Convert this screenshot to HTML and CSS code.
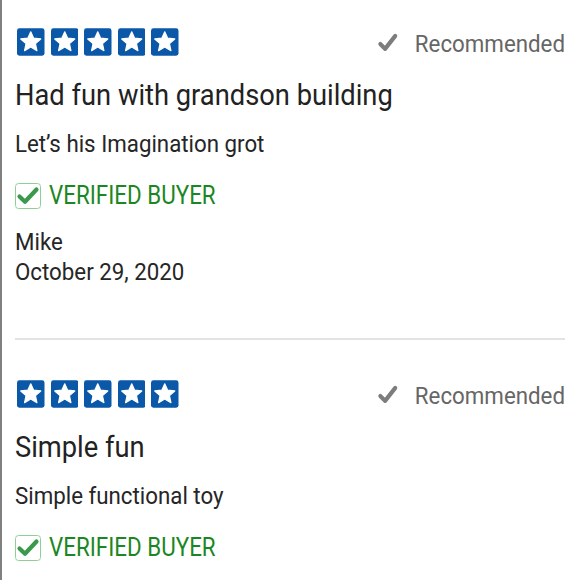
FILE: index.html
```html
<!DOCTYPE html>
<html>
<head>
<meta charset="utf-8">
<link rel="stylesheet" href="styles.css">
</head>
<body>
<div class="page">
  <div class="review">
    <div class="top">
      <div class="stars">
        <svg class="star" viewBox="0 0 28 28"><rect width="28" height="28" rx="2.5" fill="#0b57a8"/><polygon points="14,3.6 17,10.1 24.2,10.9 18.8,15.7 20.3,22.8 14,19.2 7.7,22.8 9.2,15.7 3.8,10.9 11,10.1" fill="#fff" stroke="#fff" stroke-width="1.2" stroke-linejoin="round"/></svg>
        <svg class="star" viewBox="0 0 28 28"><rect width="28" height="28" rx="2.5" fill="#0b57a8"/><polygon points="14,3.6 17,10.1 24.2,10.9 18.8,15.7 20.3,22.8 14,19.2 7.7,22.8 9.2,15.7 3.8,10.9 11,10.1" fill="#fff" stroke="#fff" stroke-width="1.2" stroke-linejoin="round"/></svg>
        <svg class="star" viewBox="0 0 28 28"><rect width="28" height="28" rx="2.5" fill="#0b57a8"/><polygon points="14,3.6 17,10.1 24.2,10.9 18.8,15.7 20.3,22.8 14,19.2 7.7,22.8 9.2,15.7 3.8,10.9 11,10.1" fill="#fff" stroke="#fff" stroke-width="1.2" stroke-linejoin="round"/></svg>
        <svg class="star" viewBox="0 0 28 28"><rect width="28" height="28" rx="2.5" fill="#0b57a8"/><polygon points="14,3.6 17,10.1 24.2,10.9 18.8,15.7 20.3,22.8 14,19.2 7.7,22.8 9.2,15.7 3.8,10.9 11,10.1" fill="#fff" stroke="#fff" stroke-width="1.2" stroke-linejoin="round"/></svg>
        <svg class="star" viewBox="0 0 28 28"><rect width="28" height="28" rx="2.5" fill="#0b57a8"/><polygon points="14,3.6 17,10.1 24.2,10.9 18.8,15.7 20.3,22.8 14,19.2 7.7,22.8 9.2,15.7 3.8,10.9 11,10.1" fill="#fff" stroke="#fff" stroke-width="1.2" stroke-linejoin="round"/></svg>
      </div>
      <div class="rec">
        <svg class="rec-check" viewBox="0 0 21 18"><path d="M3 10.5 L8 15 L18.5 2.8" fill="none" stroke="#7d7d7d" stroke-width="4.2" stroke-linecap="round" stroke-linejoin="round"/></svg>
        <span>Recommended</span>
      </div>
    </div>
    <h2 class="title">Had fun with grandson building</h2>
    <p class="body">Let’s his Imagination grot</p>
    <div class="verified">
      <svg class="vbox" viewBox="0 0 26 26"><rect x="0.5" y="0.5" width="25" height="25" rx="3" fill="#fff" stroke="#8fcf97"/><path d="M4.5 13.5 L10 18.8 L21.5 6.5" fill="none" stroke="#3a994b" stroke-width="4.2" stroke-linecap="round" stroke-linejoin="round"/></svg>
      <span class="vtext">VERIFIED BUYER</span>
    </div>
    <div class="author">Mike</div>
    <div class="date">October 29, 2020</div>
  </div>
  <hr class="divider">
  <div class="review">
    <div class="top">
      <div class="stars">
        <svg class="star" viewBox="0 0 28 28"><rect width="28" height="28" rx="2.5" fill="#0b57a8"/><polygon points="14,3.6 17,10.1 24.2,10.9 18.8,15.7 20.3,22.8 14,19.2 7.7,22.8 9.2,15.7 3.8,10.9 11,10.1" fill="#fff" stroke="#fff" stroke-width="1.2" stroke-linejoin="round"/></svg>
        <svg class="star" viewBox="0 0 28 28"><rect width="28" height="28" rx="2.5" fill="#0b57a8"/><polygon points="14,3.6 17,10.1 24.2,10.9 18.8,15.7 20.3,22.8 14,19.2 7.7,22.8 9.2,15.7 3.8,10.9 11,10.1" fill="#fff" stroke="#fff" stroke-width="1.2" stroke-linejoin="round"/></svg>
        <svg class="star" viewBox="0 0 28 28"><rect width="28" height="28" rx="2.5" fill="#0b57a8"/><polygon points="14,3.6 17,10.1 24.2,10.9 18.8,15.7 20.3,22.8 14,19.2 7.7,22.8 9.2,15.7 3.8,10.9 11,10.1" fill="#fff" stroke="#fff" stroke-width="1.2" stroke-linejoin="round"/></svg>
        <svg class="star" viewBox="0 0 28 28"><rect width="28" height="28" rx="2.5" fill="#0b57a8"/><polygon points="14,3.6 17,10.1 24.2,10.9 18.8,15.7 20.3,22.8 14,19.2 7.7,22.8 9.2,15.7 3.8,10.9 11,10.1" fill="#fff" stroke="#fff" stroke-width="1.2" stroke-linejoin="round"/></svg>
        <svg class="star" viewBox="0 0 28 28"><rect width="28" height="28" rx="2.5" fill="#0b57a8"/><polygon points="14,3.6 17,10.1 24.2,10.9 18.8,15.7 20.3,22.8 14,19.2 7.7,22.8 9.2,15.7 3.8,10.9 11,10.1" fill="#fff" stroke="#fff" stroke-width="1.2" stroke-linejoin="round"/></svg>
      </div>
      <div class="rec">
        <svg class="rec-check" viewBox="0 0 21 18"><path d="M3 10.5 L8 15 L18.5 2.8" fill="none" stroke="#7d7d7d" stroke-width="4.2" stroke-linecap="round" stroke-linejoin="round"/></svg>
        <span>Recommended</span>
      </div>
    </div>
    <h2 class="title">Simple fun</h2>
    <p class="body">Simple functional toy</p>
    <div class="verified">
      <svg class="vbox" viewBox="0 0 26 26"><rect x="0.5" y="0.5" width="25" height="25" rx="3" fill="#fff" stroke="#8fcf97"/><path d="M4.5 13.5 L10 18.8 L21.5 6.5" fill="none" stroke="#3a994b" stroke-width="4.2" stroke-linecap="round" stroke-linejoin="round"/></svg>
      <span class="vtext">VERIFIED BUYER</span>
    </div>
  </div>
</div>
</body>
</html>
```

FILE: styles.css
```css
html, body {
  margin: 0;
  padding: 0;
  background: #fff;
}
body {
  font-family: Roboto, "Noto Sans", sans-serif;
  color: #222;
  height: 580px;
  overflow: hidden;
}
.page {
  border-left: 2px solid #808080;
  min-height: 580px;
  padding: 28px 15px 0 13px;
  box-sizing: border-box;
}
.top {
  display: flex;
  justify-content: space-between;
  align-items: center;
  height: 28px;
}
.stars {
  display: flex;
  gap: 6px;
  padding-left: 2px;
}
.star {
  width: 27.5px;
  height: 28px;
  display: block;
}
.rec {
  display: flex;
  align-items: center;
  gap: 19px;
  color: #666;
  font-size: 24.5px;
  line-height: 28px;
  transform: scaleX(0.91);
  transform-origin: right center;
  padding-top: 3px;
}
.rec-check {
  width: 22px;
  height: 19px;
  display: block;
  margin-top: -3px;
}
.title {
  margin: 22px 0 0;
  font-size: 30px;
  font-weight: 400;
  line-height: 34px;
  color: #222;
  transform: scaleX(0.91);
  transform-origin: left center;
}
.body {
  margin: 18px 0 0;
  font-size: 24.5px;
  line-height: 28px;
  color: #262626;
  transform: scaleX(0.91);
  transform-origin: left center;
}
.verified {
  display: flex;
  align-items: center;
  gap: 8px;
  margin-top: 22px;
  color: #1b8722;
  font-size: 25px;
  line-height: 28px;
}
.vtext {
  display: block;
  padding-top: 2px;
  transform: scaleX(0.895);
  transform-origin: left center;
}
.vbox {
  width: 26px;
  height: 26px;
  display: block;
  margin-top: 2px;
}
.author {
  margin-top: 17px;
  font-size: 24.5px;
  line-height: 30px;
  color: #262626;
  transform: scaleX(0.91);
  transform-origin: left center;
}
.date {
  font-size: 24.5px;
  line-height: 30px;
  color: #262626;
  transform: scaleX(0.91);
  transform-origin: left center;
}
.divider {
  border: 0;
  border-top: 2px solid #e3e3e3;
  margin: 51px 0 40px;
}
```
